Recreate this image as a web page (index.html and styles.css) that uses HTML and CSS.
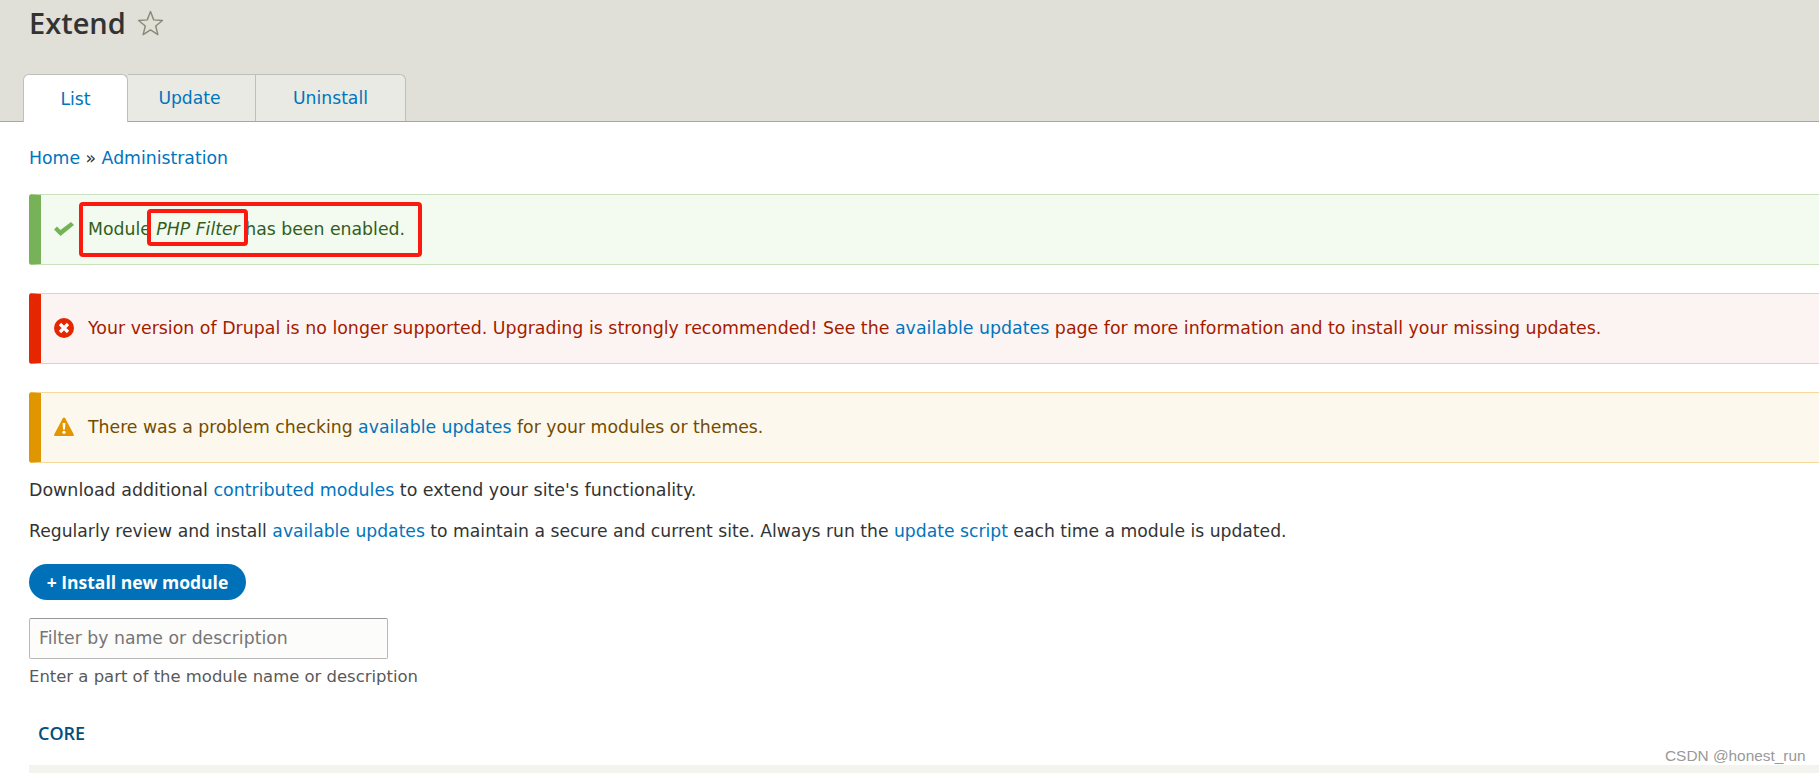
FILE: index.html
```html
<!DOCTYPE html>
<html lang="en">
<head>
<meta charset="utf-8">
<title>Extend</title>
<link rel="stylesheet" href="styles.css">
</head>
<body>
<header class="head">
  <div class="title-row">
    <h1>Extend</h1>
    <svg class="star" width="27" height="27" viewBox="0 0 26 26"><path d="M13 1.500l3.100 8 8.400.6-6.500 5.300 2.100 8.300-7.100-4.500-7.100 4.500 2.100-8.300-6.500-5.300 8.400-.6z" fill="none" stroke="#8a8a78" stroke-width="1.400" stroke-linejoin="round"/></svg>
  </div>
  <nav class="tabs">
    <a class="tab tab-active">List</a>
    <a class="tab tab-update">Update</a>
    <a class="tab tab-uninstall">Uninstall</a>
  </nav>
</header>
<main class="main">
  <div class="crumbs"><a>Home</a> » <a>Administration</a></div>
  <div class="msg msg-ok">
    <svg class="ico" width="20" height="20" viewBox="0 0 20 20"><path d="M0 10.500l3-3 3.500 3.500L17 3l3 3L6.500 17z" fill="#73b355"/></svg>
    <span>Module <em>PHP Filter</em> has been enabled.</span>
  </div>
  <div class="msg msg-err">
    <svg class="ico" width="20" height="20" viewBox="0 0 20 20"><circle cx="10" cy="10" r="10" fill="#e32700"/><path d="M6 6l8 8M14 6l-8 8" stroke="#fff" stroke-width="3.200"/></svg>
    <span>Your version of Drupal is no longer supported. Upgrading is strongly recommended! See the <a>available updates</a> page for more information and to install your missing updates.</span>
  </div>
  <div class="msg msg-warn">
    <svg class="ico" width="20" height="20" viewBox="0 0 20 20"><path d="M8.800 1.200c.6-1 1.800-1 2.400 0l8.500 16c.5 1 0 1.800-1.200 1.800H1.500C.3 19-.2 18.200.3 17.200z" fill="#e29700"/><path d="M8.600 6h2.800l-.5 6.500H9.100z" fill="#fff"/><circle cx="10" cy="15.300" r="1.600" fill="#fff"/></svg>
    <span>There was a problem checking <a>available updates</a> for your modules or themes.</span>
  </div>
  <p class="para para-first">Download additional <a>contributed modules</a> to extend your site's functionality.</p>
  <p class="para para-second">Regularly review and install <a>available updates</a> to maintain a secure and current site. Always run the <a>update script</a> each time a module is updated.</p>
  <a class="btn">+ Install new module</a>
  <input class="filter" type="text" placeholder="Filter by name or description">
  <div class="hint">Enter a part of the module name or description</div>
  <h2 class="core">CORE</h2>
  <div class="tablebar"></div>
</main>
<div class="mark mark-outer"></div>
<div class="mark mark-inner"></div>
<div class="watermark">CSDN @honest_run</div>
</body>
</html>
```
FILE: styles.css
```css
* { box-sizing: border-box; }
html, body { margin: 0; height: 773px; overflow: hidden; }
body { background: #fff; color: #333; font-family: "DejaVu Sans", sans-serif; font-size: 17.300px; position: relative; width: 1819px; }
a { color: #0074bd; text-decoration: none; }
.head { background: #e0e0d8; height: 122px; border-bottom: 1px solid #a6a6a6; padding-left: 23px; display: flex; flex-direction: column; }
.title-row { display: flex; align-items: center; height: 74px; padding: 0 0 28px 6px; gap: 11px; }
h1 { margin: 0; font-family: "Open Sans", sans-serif; font-weight: 600; font-size: 29px; line-height: 48px; color: #333; }
.tabs { display: flex; height: 48px; }
.tab { display: flex; align-items: center; justify-content: center; background: #eaeae4; border: 1px solid #bfbfba; border-left: 0; border-bottom: 0; font-size: 17.200px; height: 47px; }
.tab-active { width: 105px; background: #fff; border-left: 1px solid #bfbfba; border-radius: 6px 6px 0 0; height: 48px; margin-bottom: -1px; position: relative; }
.tab-update { width: 128px; padding-right: 4px; }
.tab-uninstall { width: 150px; border-radius: 0 6px 0 0; }
.main { padding-left: 29px; }
.crumbs { margin-top: 25px; height: 22px; line-height: 22px; }
.msg { display: flex; align-items: center; height: 71px; margin-right: -4px; border: 1px solid; border-left-width: 12px; border-radius: 3px 0 0 3px; padding: 0 0 2px 13px; gap: 14px; }
.msg .ico { flex: none; }
.crumbs + .msg { margin-top: 25px; }
.msg + .msg { margin-top: 28px; }
.msg-ok { background: #f3faef; border-color: #c9e1bd; border-left-color: #77b259; color: #325e1c; }
.msg-err { background: #fcf4f2; border-color: #f4c8c0; border-left-color: #e62600; color: #a51b00; font-size: 17.400px; }
.msg-warn { background: #fdf8ed; border-color: #f6d99c; border-left-color: #e09600; color: #734c00; }
.para { margin: 0; line-height: 22px; }
.para-first { margin-top: 16px; font-size: 17.450px; }
.para-second { margin-top: 19px; font-size: 17.200px; }
.btn { display: flex; align-items: center; justify-content: center; width: 217px; height: 36px; margin-top: 22px; border-radius: 18px; background: #0071b8; color: #fff; font-family: "Open Sans", sans-serif; font-weight: 700; font-size: 17.500px; }
.filter { display: block; width: 359px; height: 41px; margin-top: 18px; border: 1px solid #b8b8b8; border-top-color: #999; border-radius: 2px; background: #fcfcfa; padding: 0 9px 2px; font: 17.300px "DejaVu Sans", sans-serif; }
.filter::placeholder { color: #757575; opacity: 1; }
.hint { margin-top: 8px; font-size: 16.450px; line-height: 20px; color: #595959; }
.core { margin: 34px 0 0 9px; font-family: "Open Sans", sans-serif; font-size: 18px; font-weight: 600; line-height: 24px; color: #004f80; }
.tablebar { height: 20px; margin-top: 20px; background: #f3f4ee; }
.mark { position: absolute; border: 4px solid #fb1a10; border-radius: 4px; }
.mark-outer { left: 79px; top: 202px; width: 343px; height: 55px; }
.mark-inner { left: 147px; top: 209px; width: 101px; height: 37px; }
.watermark { position: absolute; left: 1665px; top: 747px; font-family: "Liberation Sans", sans-serif; font-size: 15.400px; color: #999; }
```
